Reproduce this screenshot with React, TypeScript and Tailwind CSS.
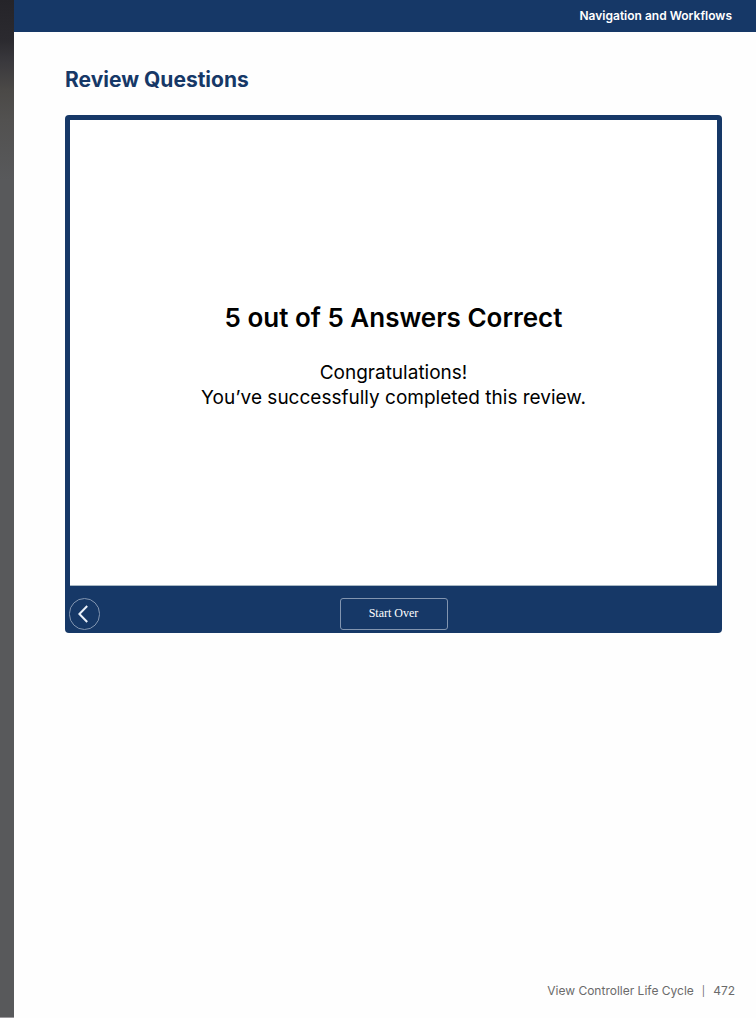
export default function App() {
  return (
    <div className="flex min-h-screen bg-[#fefefe] font-['Inter',sans-serif]">
      <aside
        aria-hidden="true"
        className="w-3.5 shrink-0 border-b border-[#9a989c] bg-[#58595b] bg-[linear-gradient(to_bottom,#252429_0px,#2b2a2f_40px,#3a393d_62px,#4b4947_90px,#525150_120px,#58595b_180px)]"
      />
      <div className="flex min-w-0 flex-1 flex-col">
        <header className="flex h-8 items-center justify-end bg-[#163867] pr-6">
          <p className="text-xs font-semibold text-white">Navigation and Workflows</p>
        </header>
        <main className="flex-1 pt-8 pr-[34px] pl-[51px]">
          <h1 className="text-[21px] leading-8 font-bold text-[#163867]">Review Questions</h1>
          <section className="mt-[19px] rounded bg-[#163867] px-1 pt-[5px]">
            <div className="mx-px flex h-[466px] flex-col items-center border-b border-[#a9b9c4] bg-white pt-[180px] text-center text-black">
              <h2 className="text-[26px] leading-9 font-semibold">5 out of 5 Answers Correct</h2>
              <p className="mt-6 text-[19px] leading-[25px]">
                Congratulations!
                <br />
                You’ve successfully completed this review.
              </p>
            </div>
            <div className="grid h-[47px] grid-cols-[1fr_auto_1fr] items-end pb-[3px]">
              <button
                type="button"
                aria-label="Previous"
                className="flex h-8 w-[31px] items-center justify-center rounded-full border border-[#8295b0] text-[#eaf1fb]"
              >
                <svg width="29" height="30" viewBox="0 0 29 30" fill="none" stroke="currentColor" strokeWidth="2">
                  <path d="M17.2 7 L9.4 15 L17.2 23" />
                </svg>
              </button>
              <button
                type="button"
                className="h-8 w-[108px] rounded-[3px] border border-[#8295b0] pb-0.5 font-['Liberation_Serif',serif] text-xs text-white"
              >
                Start Over
              </button>
            </div>
          </section>
        </main>
        <footer className="flex justify-end pr-[21px] pb-[18px] text-xs leading-[18px] text-[#6b6b6b]">
          <p className="flex gap-2">
            <span>View Controller Life Cycle</span>
            <span className="text-[10px]">|</span>
            <span>472</span>
          </p>
        </footer>
      </div>
    </div>
  );
}
